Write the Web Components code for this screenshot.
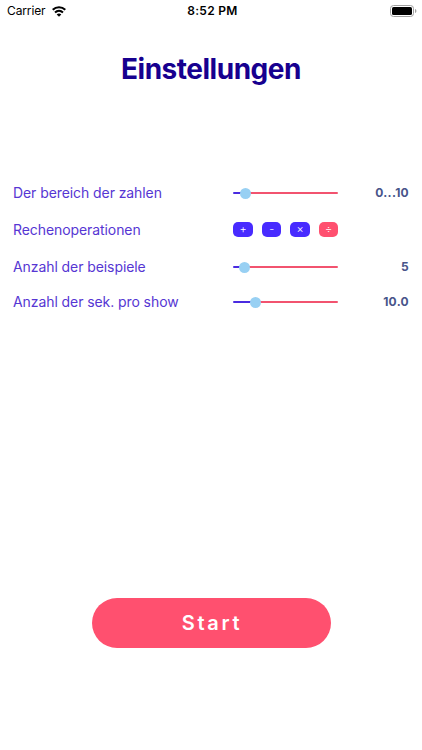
<!DOCTYPE html>
<html lang="de">
<head>
<meta charset="utf-8">
<title>Einstellungen</title>
<style>
  body {
    margin: 0;
    background: #fff;
    font-family: Inter, "Liberation Sans", sans-serif;
    overflow: hidden;
  }
</style>
</head>
<body>
<settings-screen></settings-screen>

<script>
const define = (name, html, setup) => {
  const template = document.createElement("template");
  template.innerHTML = html;

  customElements.define(name, class extends HTMLElement {
    constructor() {
      super();
      this.attachShadow({ mode: "open" }).append(template.content.cloneNode(true));
    }

    connectedCallback() {
      if (setup) setup(this);
    }
  });
};

define("status-bar", `
  <style>
    :host {
      display: grid;
      grid-template-columns: 1fr auto 1fr;
      align-items: center;
      height: 22px;
      padding: 0 5px 0 7px;
      color: #000;
      font-size: 12px;
      line-height: 22px;
    }
    .carrier {
      display: flex;
      align-items: center;
      gap: 6px;
      letter-spacing: -0.12px;
    }
    .time {
      padding-left: 1px;
      font-weight: 600;
      letter-spacing: 0.3px;
    }
    .battery {
      justify-self: end;
    }
    svg {
      display: block;
    }
  </style>
  <div class="carrier">
    <span>Carrier</span>
    <svg width="14" height="11" viewBox="0 0 14 11" fill="none">
      <path d="M.7 3.8C4.300 .3 9.700 .3 13.300 3.800" stroke="#000" stroke-width="2.100"/>
      <path d="M3 6.500C5.300 4.300 8.700 4.300 11 6.500" stroke="#000" stroke-width="2"/>
      <path d="M7 10.700L4.700 8.400C6 7.200 8 7.200 9.300 8.400Z" fill="#000"/>
    </svg>
  </div>
  <span class="time">8:52 PM</span>
  <svg class="battery" width="27" height="12" viewBox="0 0 27 12">
    <rect x=".5" y=".5" width="23" height="11" rx="3" fill="#fff" stroke="#a0a0a0"/>
    <rect x="2" y="2" width="20" height="8" rx="1.6" fill="#000"/>
    <path d="M25 4v4c.9-.3 1.4-1.1 1.4-2S25.9 4.3 25 4z" fill="#a0a0a0"/>
  </svg>
`);

define("range-slider", `
  <style>
    :host {
      display: flex;
      align-items: center;
      height: 12px;
    }
    .track {
      flex: 1;
      height: 2px;
      border-radius: 1px;
      background: linear-gradient(to right, #4a2be0 var(--pos), #f2536f var(--pos));
    }
    .thumb {
      position: absolute;
      width: 11px;
      height: 11px;
      margin-left: calc(var(--pos) - 5.5px);
      border-radius: 50%;
      background: #98d0f3;
    }
  </style>
  <div class="track"></div>
  <div class="thumb"></div>
`, (el) => {
  el.style.setProperty("--pos", `${el.getAttribute("position")}px`);
});

define("operation-toggle", `
  <style>
    :host {
      display: flex;
      align-items: center;
      justify-content: center;
      width: 19.5px;
      height: 15px;
      margin-bottom: 2px;
      border-radius: 5px;
      background: #ff506f;
      color: #fff;
      font-size: 11px;
      font-weight: 300;
      line-height: 15px;
    }
    :host([active]) {
      background: #482bff;
    }
  </style>
  <slot></slot>
`);

define("setting-row", `
  <style>
    :host {
      display: grid;
      grid-template-columns: 220.4px 105px 1fr;
      align-items: center;
      height: 20px;
    }
    .label {
      padding-bottom: 2px;
      color: #5636d3;
      font-size: 14px;
      letter-spacing: -0.08px;
      white-space: nowrap;
    }
    .control {
      display: flex;
      justify-content: space-between;
    }
    ::slotted(range-slider) {
      flex: 1;
    }
    .value {
      padding-bottom: 1px;
      color: #48558a;
      font-size: 12px;
      font-weight: 700;
      letter-spacing: 0.3px;
      text-align: right;
    }
  </style>
  <div class="label"><slot name="label"></slot></div>
  <div class="control"><slot></slot></div>
  <div class="value"><slot name="value"></slot></div>
`);

define("start-button", `
  <style>
    :host {
      display: block;
    }
    button {
      display: block;
      width: 239px;
      height: 50px;
      margin: 0 auto;
      padding: 0 0 0 2px;
      border: 0;
      border-radius: 25px;
      background: #ff506f;
      color: #fff;
      font: 600 20px/50px Inter, "Liberation Sans", sans-serif;
      letter-spacing: 2.7px;
    }
  </style>
  <button type="button"><slot></slot></button>
`);

define("settings-screen", `
  <style>
    :host {
      display: flex;
      flex-direction: column;
      box-sizing: border-box;
      height: 750px;
      padding-bottom: 102px;
    }
    h1 {
      margin: 29px 0 0;
      color: #17008f;
      font-size: 28px;
      font-weight: 700;
      line-height: 36px;
      letter-spacing: -0.48px;
      text-align: center;
    }
    .rows {
      margin-top: 96px;
      padding: 0 13px;
    }
    .rows > * + * {
      margin-top: 17px;
    }
    .rows > :last-child {
      margin-top: 15px;
    }
    start-button {
      margin-top: auto;
    }
  </style>
  <status-bar></status-bar>
  <h1>Einstellungen</h1>
  <div class="rows">
    <setting-row>
      <span slot="label">Der bereich der zahlen</span>
      <range-slider position="12.5"></range-slider>
      <span slot="value">0...10</span>
    </setting-row>
    <setting-row>
      <span slot="label">Rechenoperationen</span>
      <operation-toggle active>+</operation-toggle>
      <operation-toggle active>-</operation-toggle>
      <operation-toggle active>×</operation-toggle>
      <operation-toggle>÷</operation-toggle>
    </setting-row>
    <setting-row>
      <span slot="label">Anzahl der beispiele</span>
      <range-slider position="11.5"></range-slider>
      <span slot="value">5</span>
    </setting-row>
    <setting-row>
      <span slot="label">Anzahl der sek. pro show</span>
      <range-slider position="22"></range-slider>
      <span slot="value">10.0</span>
    </setting-row>
  </div>
  <start-button>Start</start-button>
`);
</script>
</body>
</html>
